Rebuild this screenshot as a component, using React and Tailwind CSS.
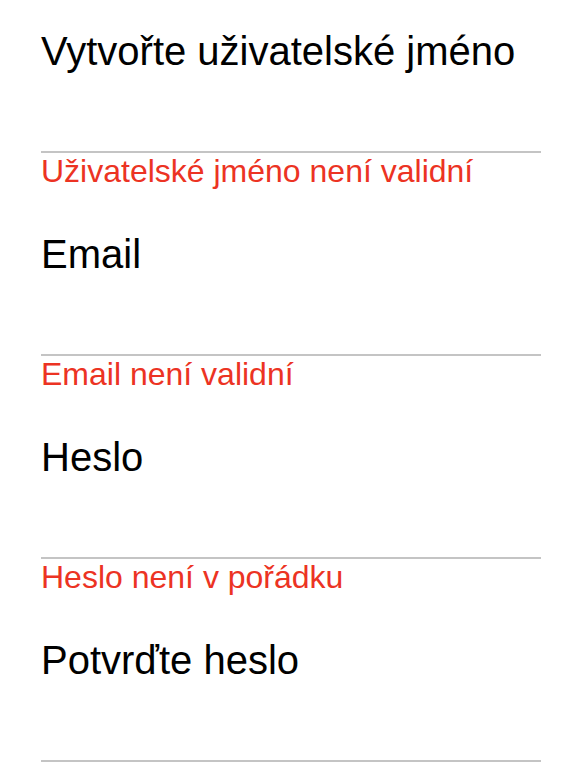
import React from "react";

const fields = [
  { label: "Vytvořte uživatelské jméno", error: "Uživatelské jméno není validní" },
  { label: "Email", error: "Email není validní" },
  { label: "Heslo", error: "Heslo není v pořádku" },
  { label: "Potvrďte heslo", error: null },
];

export default function App() {
  return (
    <div className="h-[784px] w-full overflow-hidden bg-white pl-[41px] pt-[28px]" style={{ fontFamily: '"Liberation Sans", Arial, sans-serif' }}>
      <div className="w-[500px]">
        {fields.map((f) => (
          <div key={f.label} className="h-[203px]">
            <div className="text-[40px] leading-[46px] text-black">{f.label}</div>
            <div className="h-[79px] border-b-2 border-[#c4c4c4]" />
            {f.error && <div className="text-[32px] leading-[36px] text-[#ec3323]">{f.error}</div>}
          </div>
        ))}
      </div>
    </div>
  );
}
